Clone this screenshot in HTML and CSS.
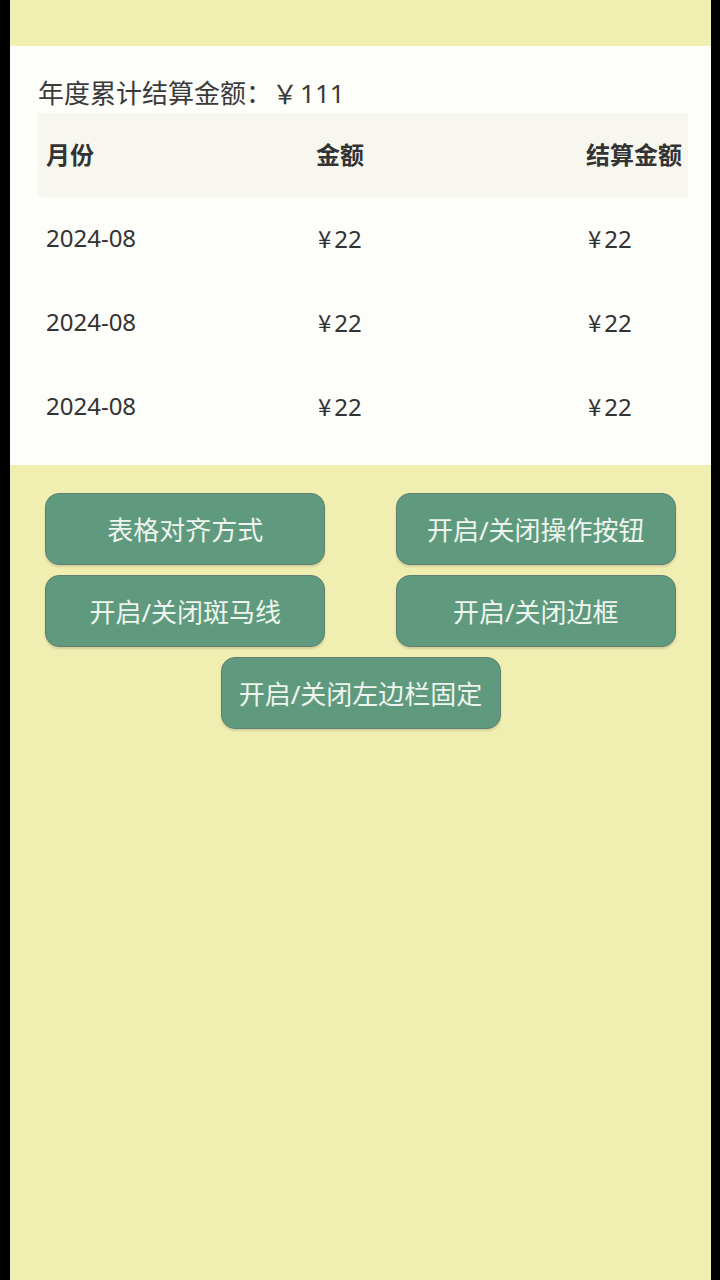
FILE: index.html
```html
<!DOCTYPE html>
<html lang="zh-CN">
<head>
<meta charset="utf-8">
<title>年度结算</title>
<link rel="stylesheet" href="styles.css">
</head>
<body>
<div class="screen">
  <div class="topbar"></div>
  <section class="card">
    <div class="total">年度累计结算金额：<span class="yen-big">￥</span>111</div>
    <div class="table-wrap">
      <div class="table">
        <div class="row head">
          <div class="cell">月份</div>
          <div class="cell">金额</div>
          <div class="cell">结算金额</div>
        </div>
        <div class="row">
          <div class="cell">2024-08</div>
          <div class="cell money"><span class="yen">¥</span>22</div>
          <div class="cell money"><span class="yen">¥</span>22</div>
        </div>
        <div class="row">
          <div class="cell">2024-08</div>
          <div class="cell money"><span class="yen">¥</span>22</div>
          <div class="cell money"><span class="yen">¥</span>22</div>
        </div>
        <div class="row">
          <div class="cell">2024-08</div>
          <div class="cell money"><span class="yen">¥</span>22</div>
          <div class="cell money"><span class="yen">¥</span>22</div>
        </div>
      </div>
    </div>
  </section>
  <div class="actions">
    <button class="btn">表格对齐方式</button>
    <button class="btn">开启/关闭操作按钮</button>
    <button class="btn">开启/关闭斑马线</button>
    <button class="btn">开启/关闭边框</button>
    <button class="btn">开启/关闭左边栏固定</button>
  </div>
</div>
</body>
</html>
```

FILE: styles.css
```css
html, body {
  margin: 0;
  padding: 0;
  background: #000;
}
body {
  font-family: "Noto Sans", "Noto Sans CJK SC", sans-serif;
  color: #333;
}
.screen {
  margin: 0 9px 0 10px;
  min-height: 1280px;
  background: #f0eeb0;
}
.topbar {
  height: 46px;
}
.card {
  background: #fdfdfa;
  padding: 27px 0 16px 28px;
}
.total {
  height: 40px;
  font-size: 26px;
  line-height: 40px;
  color: #3a3a3a;
  display: flex;
  align-items: center;
}
.yen-big {
  font-family: "Noto Sans CJK SC", sans-serif;
  margin-right: 2px;
}
.table-wrap {
  width: 650px;
  overflow: hidden;
}
.table {
  width: 810px;
}
.row {
  display: grid;
  grid-template-columns: 270px 270px 270px;
  height: 84px;
  box-sizing: border-box;
  padding-bottom: 4px;
  align-items: center;
  font-size: 24px;
}
.row.head {
  background: #f7f7f0;
  font-weight: 700;
  color: #333;
}
.cell {
  padding-left: 8px;
}
.cell.money {
  padding-left: 10px;
}
.yen {
  font-family: "Noto Sans CJK SC", sans-serif;
  margin-right: 3px;
}
.actions {
  margin-top: 28px;
  display: flex;
  flex-wrap: wrap;
  justify-content: space-around;
  row-gap: 10px;
}
.btn {
  width: 280px;
  height: 72px;
  border: 1px solid #5f7f72;
  border-radius: 14px;
  background: #5f9a7e;
  color: #eef5ee;
  font-family: "Noto Sans", "Noto Sans CJK SC", sans-serif;
  font-size: 26px;
  padding: 0;
  box-shadow: 0 2px 2px rgba(0, 0, 0, 0.12);
}
```
